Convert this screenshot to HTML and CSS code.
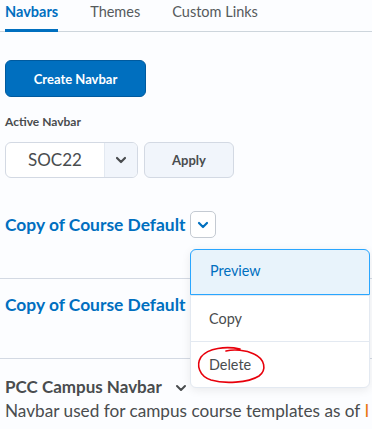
FILE: index.html
```html
<!DOCTYPE html>
<html>

<head>
    <title>Navbars</title>
    <link rel="stylesheet" href="styles.css">
</head>

<body>
    <div class="page">
        <div class="tabs">
            <span class="tab active">Navbars</span>
            <span class="tab">Themes</span>
            <span class="tab">Custom Links</span>
        </div>

        <button class="primary">Create Navbar</button>

        <div class="label">Active Navbar</div>
        <div class="active-row">
            <div class="select">
                <span class="select-value">SOC22</span>
                <span class="select-arrow">
                    <svg width="12" height="8" viewBox="0 0 12 8"><path d="M2 2l4 4 4-4" fill="none" stroke="#494c4e" stroke-width="2.2" stroke-linecap="round" stroke-linejoin="round"/></svg>
                </span>
            </div>
            <button class="secondary">Apply</button>
        </div>

        <div class="item first">
            <div class="item-title">
                <span class="link">Copy of Course Default</span>
                <span class="menu-btn">
                    <svg width="12" height="8" viewBox="0 0 12 8"><path d="M2 2l4 4 4-4" fill="none" stroke="#006fbf" stroke-width="2.2" stroke-linecap="round" stroke-linejoin="round"/></svg>
                </span>
            </div>
        </div>

        <div class="item second">
            <div class="item-title">
                <span class="link">Copy of Course Default</span>
            </div>
        </div>

        <div class="item last">
            <div class="item-title">
                <span class="plain">PCC Campus Navbar</span>
                <svg class="small-chev" width="12" height="8" viewBox="0 0 12 8"><path d="M2 2l4 4 4-4" fill="none" stroke="#494c4e" stroke-width="2" stroke-linecap="round" stroke-linejoin="round"/></svg>
            </div>
            <div class="desc">Navbar used for campus course templates as of <span class="orange">I</span></div>
        </div>

        <div class="dropdown">
            <div class="dd-item selected">Preview</div>
            <div class="dd-item">Copy</div>
            <div class="dd-item">Delete</div>
        </div>

        <svg class="circle" width="72" height="40" viewBox="0 0 72 40">
            <path d="M44 4C30 1 12 3 5 12C0 20 3 31 15 35C28 39 52 38 63 31C71 25 69 14 58 9C50 5 38 4 30 6" fill="none" stroke="#e8000b" stroke-width="1.6" stroke-linecap="round"/>
        </svg>
    </div>
</body>

</html>
```

FILE: styles.css
```css
body {
    margin: 0;
    background-color: #fcfdff;
    font-family: Lato, "Open Sans", sans-serif;
    color: #494c4e;
    overflow: hidden;
}

.page {
    position: relative;
    padding-left: 5px;
    width: 367px;
    height: 429px;
}

.tabs {
    display: flex;
    gap: 32px;
    height: 31px;
    border-bottom: 1px solid #cdd5dc;
    margin-left: -5px;
    padding-left: 5px;
}

.tab {
    font-size: 14.5px;
    line-height: 24px;
    color: #565a5c;
    box-sizing: border-box;
    height: 32px;
}

.tab.active {
    color: #006fbf;
    font-weight: bold;
    border-bottom: 3px solid #006fbf;
}

.primary {
    display: block;
    margin-top: 28px;
    width: 141px;
    height: 37px;
    background-color: #006fbf;
    color: white;
    border: 1px solid #005a9e;
    border-radius: 6px;
    font-family: Lato, sans-serif;
    font-size: 13px;
    font-weight: bold;
}

.label {
    margin-top: 17px;
    font-size: 12px;
    font-weight: bold;
    line-height: 16px;
}

.active-row {
    display: flex;
    gap: 6px;
    margin-top: 12px;
}

.select {
    display: flex;
    width: 133px;
    height: 36px;
    box-sizing: border-box;
    border: 1px solid #d3d9e3;
    border-radius: 6px;
    overflow: hidden;
    background-color: white;
}

.select-value {
    width: 98px;
    text-align: center;
    font-size: 17px;
    line-height: 34px;
    color: #494c4e;
}

.select-arrow {
    flex: 1;
    display: flex;
    align-items: center;
    justify-content: center;
    background-color: #f1f5fb;
    border-left: 1px solid #e3e9f1;
}

.secondary {
    width: 90px;
    height: 36px;
    background-color: #f1f5fb;
    border: 1px solid #d3d9e3;
    border-radius: 6px;
    font-family: Lato, sans-serif;
    font-size: 13px;
    font-weight: bold;
    color: #494c4e;
}

.item {
    border-bottom: 1px solid #d3d9e3;
    margin-left: -5px;
    padding-left: 5px;
    height: 80px;
    box-sizing: border-box;
}

.item.first {
    margin-top: 33px;
    height: 68px;
}

.item.second {
    padding-top: 12px;
}

.item.last {
    border-bottom: none;
    padding-top: 14px;
}

.item-title {
    display: flex;
    align-items: center;
    gap: 5px;
    height: 27px;
}

.link {
    color: #006fbf;
    font-size: 17.4px;
    font-weight: bold;
}

.plain {
    font-size: 17px;
    font-weight: bold;
    color: #494c4e;
}

.small-chev {
    margin-left: 8px;
    margin-top: 3px;
}

.menu-btn {
    display: flex;
    align-items: center;
    justify-content: center;
    width: 26px;
    height: 27px;
    box-sizing: border-box;
    border: 1px solid #c4cad2;
    border-radius: 5px;
    background-color: white;
}

.desc {
    font-size: 17.2px;
    line-height: 22px;
    white-space: nowrap;
}

.orange {
    color: #e87511;
}

.dropdown {
    position: absolute;
    left: 190px;
    top: 249px;
    width: 180px;
    background-color: white;
    border: 1px solid #e3e9f1;
    border-radius: 6px;
    box-shadow: 0 2px 10px rgba(0, 0, 0, 0.08);
    box-sizing: border-box;
}

.dd-item {
    height: 46px;
    box-sizing: border-box;
    padding-left: 18px;
    line-height: 46px;
    font-size: 14.4px;
    color: #494c4e;
    border-top: 1px solid #e3e9f1;
}

.dd-item:first-child {
    border-top: none;
}

.dd-item.selected {
    color: #006fbf;
    background-color: #e8f3fb;
    border: 1px solid #29a6ff;
    border-radius: 6px 6px 0 0;
    margin: -1px -1px 0;
    padding-left: 19px;
    line-height: 42px;
}

.circle {
    position: absolute;
    left: 196px;
    top: 345px;
}
```
